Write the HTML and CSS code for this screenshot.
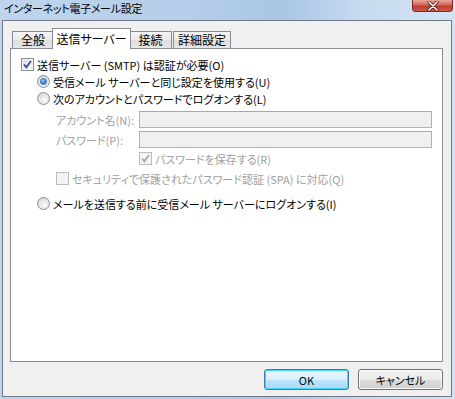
FILE: index.html
```html
<!DOCTYPE html>
<html lang="ja">
<head>
  <meta charset="UTF-8">
  <title>インターネット電子メール設定</title>
  <link rel="stylesheet" href="styles.css">
</head>
<body>
  <div class="window">
    <div class="titlebar">
      <span class="title">インターネット電子メール設定</span>
      <div class="close">
        <svg width="14" height="10" viewBox="0 0 14 10">
          <path d="M3 1 L11 9 M11 1 L3 9" stroke="#5a1c16" stroke-width="3.2" stroke-linecap="round"/>
          <path d="M3 1 L11 9 M11 1 L3 9" stroke="#ffffff" stroke-width="1.6" stroke-linecap="round"/>
        </svg>
      </div>
    </div>

    <div class="client">
      <!-- Tabs -->
      <div class="tabs">
        <div class="tab tab-general">全般</div>
        <div class="tab active">送信サーバー</div>
        <div class="tab tab-conn">接続</div>
        <div class="tab tab-detail">詳細設定</div>
      </div>

      <!-- Outgoing server page -->
      <div class="panel">
        <div class="row">
          <span class="check checked"><svg width="11" height="11" viewBox="0 0 11 11"><path d="M2 5.5 L4.3 8.3 L9 2" fill="none" stroke="#3b4f8c" stroke-width="1.8"/></svg></span>
          <span class="label">送信サーバー (SMTP) は認証が必要(O)</span>
        </div>
        <div class="row indent">
          <span class="radio selected"></span>
          <span class="label">受信メール サーバーと同じ設定を使用する(U)</span>
        </div>
        <div class="row indent">
          <span class="radio"></span>
          <span class="label">次のアカウントとパスワードでログオンする(L)</span>
        </div>
        <div class="field first">
          <span class="field-name">アカウント名(N):</span>
          <span class="input"></span>
        </div>
        <div class="field">
          <span class="field-name">パスワード(P):</span>
          <span class="input"></span>
        </div>
        <div class="row save-pw disabled">
          <span class="check checked"><svg width="11" height="11" viewBox="0 0 11 11"><path d="M2 5.5 L4.3 8.3 L9 2" fill="none" stroke="#a8a8a8" stroke-width="1.8"/></svg></span>
          <span class="label">パスワードを保存する(R)</span>
        </div>
        <div class="row spa disabled">
          <span class="check"></span>
          <span class="label">セキュリティで保護されたパスワード認証 (SPA) に対応(Q)</span>
        </div>
        <div class="row indent last">
          <span class="radio"></span>
          <span class="label">メールを送信する前に受信メール サーバーにログオンする(I)</span>
        </div>
      </div>

      <div class="buttons">
        <button class="btn default">OK</button>
        <button class="btn">キャンセル</button>
      </div>
    </div>
  </div>
</body>
</html>
```

FILE: styles.css
```css
body {
  margin: 0;
  font-family: "Noto Sans CJK JP", "Noto Sans", sans-serif;
  font-size: 11px;
  font-feature-settings: "palt";
  color: #000;
}
.window {
  width: 455px;
  height: 399px;
  background: linear-gradient(90deg, #bfd5ed 0%, #b6cee9 40%, #a9c6e4 62%, #c8dbf0 80%, #d3e3f3 100%);
  overflow: hidden;
}
.titlebar {
  height: 20px;
  display: flex;
  justify-content: space-between;
  align-items: flex-start;
}
.title {
  padding-left: 4px;
  font-size: 11px;
  letter-spacing: -0.3px;
  line-height: 17px;
}
.close {
  width: 39px;
  height: 11px;
  margin-right: 2px;
  border: 1px solid #7b2b24;
  border-top: none;
  border-radius: 0 0 4px 4px;
  background: linear-gradient(#e8a597, #d0685a 45%, #bd3a2b 55%, #cf5b47);
  display: flex;
  justify-content: center;
  align-items: center;
}
.client {
  margin: 0 3px 0 2px;
  height: 377px;
  box-sizing: border-box;
  border: 1px solid #6f7885;
  background: #f0f0f0;
  padding: 6px 0 0 7px;
}
.tabs {
  display: flex;
  align-items: flex-end;
  height: 21px;
  padding-left: 2px;
}
.tab {
  height: 17px;
  box-sizing: border-box;
  border: 1px solid #898c95;
  border-bottom: none;
  background: linear-gradient(#f3f3f3, #ebebeb 50%, #dedede 51%, #e6e6e6);
  text-align: center;
  line-height: 16px;
  font-size: 12px;
}
.tab-general {
  width: 42px;
  margin-right: -2px;
}
.tab.active {
  position: relative;
  z-index: 1;
  width: 79px;
  height: 21px;
  margin-bottom: -1px;
  background: #fff;
  line-height: 19px;
}
.tab-conn {
  width: 43px;
  margin-left: -2px;
}
.tab-detail {
  width: 58px;
  margin-left: 1px;
}
.panel {
  width: 433px;
  height: 314px;
  box-sizing: border-box;
  border: 1px solid #898c95;
  background: #fff;
  padding: 7px 10px;
}
.row {
  display: flex;
  align-items: center;
  height: 17px;
}
.row .label {
  margin-left: 3px;
  white-space: nowrap;
}
.indent {
  margin-left: 16px;
}
.disabled {
  color: #a0a0a0;
}
.save-pw {
  margin-left: 118px;
  margin-top: 2px;
}
.spa {
  margin-left: 35px;
  margin-top: 3px;
}
.last {
  margin-top: 8px;
}
.check {
  width: 13px;
  height: 13px;
  box-sizing: border-box;
  border: 1px solid #8e8f8f;
  background: linear-gradient(135deg, #dcdcdc, #fafafa);
  box-shadow: inset 0 0 0 1px #f4f4f4;
  display: flex;
  align-items: center;
  justify-content: center;
  flex-shrink: 0;
}
.disabled .check {
  border-color: #bcbcbc;
  background: #f4f4f4;
}
.radio {
  width: 13px;
  height: 13px;
  box-sizing: border-box;
  border-radius: 50%;
  border: 1px solid #8e8f8f;
  background: radial-gradient(circle at 60% 65%, #fbfbfb, #dcdcdc 70%, #c8c8c8);
  display: flex;
  align-items: center;
  justify-content: center;
  flex-shrink: 0;
}
.radio.selected::after {
  content: "";
  width: 5px;
  height: 5px;
  border-radius: 50%;
  background: radial-gradient(circle at 40% 35%, #9dd0f6, #2d6fb8 60%, #1b4f93);
  box-shadow: 0 0 0 1px #4a7fbf;
}
.field {
  display: flex;
  align-items: center;
  margin-left: 35px;
  margin-top: 3px;
  color: #a0a0a0;
}
.field.first {
  margin-top: 4px;
}
.field-name {
  width: 83px;
  white-space: nowrap;
}
.input {
  width: 295px;
  height: 17px;
  box-sizing: border-box;
  border: 1px solid #adb2b5;
  border-top-color: #a4a8ab;
  background: #f0f0f0;
}
.buttons {
  display: flex;
  justify-content: flex-end;
  gap: 9px;
  width: 433px;
  margin-top: 7px;
}
.btn {
  width: 85px;
  height: 21px;
  padding: 0;
  font: inherit;
  color: #000;
  border: 1px solid #707070;
  border-radius: 3px;
  background: linear-gradient(#f2f2f2, #ebebeb 50%, #dddddd 51%, #cfcfcf);
  box-shadow: inset 0 0 0 1px #fcfcfc;
}
.btn.default {
  border-color: #3c7fb1;
  box-shadow: inset 0 0 0 1px #48d0f7;
  background: linear-gradient(#eaf6fd, #d9f0fc 50%, #bee6fd 51%, #a7d9f5);
}
```
